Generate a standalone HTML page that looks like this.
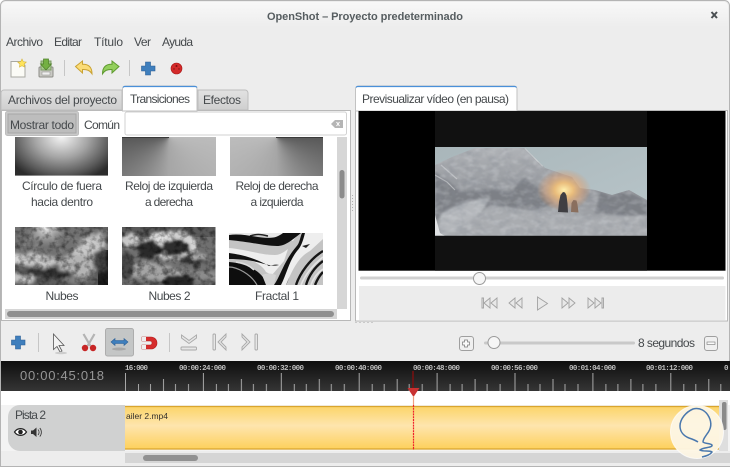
<!DOCTYPE html>
<html><head><meta charset="utf-8"><style>
html,body{margin:0;padding:0;background:#fff;overflow:hidden}
svg{display:block}
text{font-family:"Liberation Sans",sans-serif;font-size:12px;fill:#45494c}
.m{text-anchor:middle}
.r{font-size:7.500px;fill:#bdbdbd;font-family:"Liberation Mono",monospace;font-weight:bold}
</style></head><body>
<svg xmlns="http://www.w3.org/2000/svg" width="730" height="467" viewBox="0 0 730 467">
<defs>
<linearGradient id="tb" x1="0" y1="0" x2="0" y2="1"><stop offset="0" stop-color="#f8f8f8"/><stop offset="1" stop-color="#ededed"/></linearGradient>
<linearGradient id="tab" x1="0" y1="0" x2="0" y2="1"><stop offset="0" stop-color="#e2e2e2"/><stop offset="1" stop-color="#cfcfcf"/></linearGradient>
<linearGradient id="ru" x1="0" y1="0" x2="0" y2="1"><stop offset="0" stop-color="#0e0e0e"/><stop offset="1" stop-color="#353535"/></linearGradient>
<linearGradient id="clip" x1="0" y1="0" x2="0" y2="1"><stop offset="0" stop-color="#fbd467"/><stop offset=".45" stop-color="#fee5ae"/><stop offset="1" stop-color="#fdd05a"/></linearGradient>
<linearGradient id="sky" x1="0" y1="0" x2="1" y2="1"><stop offset="0" stop-color="#a9b6ba"/><stop offset="1" stop-color="#b9c6ca"/></linearGradient>
<linearGradient id="mt" x1="0" y1="0" x2="0" y2="1"><stop offset="0" stop-color="#b0b3b7"/><stop offset=".5" stop-color="#94979c"/><stop offset="1" stop-color="#aaadb1"/></linearGradient>
<radialGradient id="t1" gradientUnits="userSpaceOnUse" cx="0" cy="0" r="1" gradientTransform="translate(61.500 137) scale(60 46)"><stop offset="0" stop-color="#f4f4f4"/><stop offset=".45" stop-color="#a4a4a4"/><stop offset=".8" stop-color="#5a5a5a"/><stop offset="1" stop-color="#2c2c2c"/></radialGradient>
<radialGradient id="glow"><stop offset="0" stop-color="#fff0ae"/><stop offset=".35" stop-color="#f2c078" stop-opacity=".9"/><stop offset=".7" stop-color="#dfa578" stop-opacity=".5"/><stop offset="1" stop-color="#d99560" stop-opacity="0"/></radialGradient>
<radialGradient id="sun"><stop offset="0" stop-color="#fff"/><stop offset=".25" stop-color="#ddd" stop-opacity=".8"/><stop offset="1" stop-color="#aaa" stop-opacity="0"/></radialGradient>
<filter id="cd" x="-10%" y="-10%" width="120%" height="120%"><feTurbulence type="fractalNoise" baseFrequency=".14" numOctaves="3" seed="4" result="n"/><feDisplacementMap in="SourceGraphic" in2="n" scale="10" xChannelSelector="R" yChannelSelector="G"/><feGaussianBlur stdDeviation="1.500"/></filter>
<filter id="cd2" x="-10%" y="-10%" width="120%" height="120%"><feTurbulence type="fractalNoise" baseFrequency=".18" numOctaves="3" seed="9" result="n"/><feDisplacementMap in="SourceGraphic" in2="n" scale="9" xChannelSelector="R" yChannelSelector="G"/><feGaussianBlur stdDeviation="1.200"/></filter>
<filter id="grain" x="0" y="0" width="100%" height="100%"><feTurbulence type="fractalNoise" baseFrequency=".16" numOctaves="3" seed="6"/><feColorMatrix values="0 0 0 0 0 0 0 0 0 0 0 0 0 0 0 2.500 0 0 0 -1.050"/></filter>
<filter id="rock" x="0" y="0" width="100%" height="100%"><feTurbulence type="fractalNoise" baseFrequency=".09 .14" numOctaves="4" seed="3"/><feColorMatrix values="0 0 0 0 .25 0 0 0 0 .27 0 0 0 0 .31 1.800 0 0 0 -.78"/><feGaussianBlur stdDeviation=".5"/></filter>
<filter id="snow" x="0" y="0" width="100%" height="100%"><feTurbulence type="fractalNoise" baseFrequency=".12 .2" numOctaves="3" seed="8"/><feColorMatrix values="0 0 0 0 .85 0 0 0 0 .87 0 0 0 0 .9 2 0 0 0 -.85"/><feGaussianBlur stdDeviation=".5"/></filter>
<filter id="b1"><feGaussianBlur stdDeviation="1.200"/></filter>
<pattern id="ticks" patternUnits="userSpaceOnUse" x="125" y="361" width="77.900" height="30"><path d="M.5 12V30M13.500 23V30M25.500 23V30M38.500 18V30M50.500 23V30M63.500 23V30" stroke="#a8a8a8" stroke-width="1" fill="none"/></pattern>
<clipPath id="c3"><rect x="15" y="227" width="93" height="58"/></clipPath>
<clipPath id="c4"><rect x="122" y="227" width="93.500" height="58"/></clipPath>
<clipPath id="c5"><rect x="229" y="233" width="94" height="52"/></clipPath>
<clipPath id="cv"><rect x="435" y="147" width="212" height="88.600"/></clipPath>
<clipPath id="cmt"><path d="M435 165L452 157 475 148 525 148 535 158 545 168 572 177 580 188 595 190 612 195 629 190 647 200V236H435Z"/></clipPath>
</defs>

<!-- window -->
<rect width="730" height="467" fill="#fff"/>
<rect x=".5" y=".5" width="729" height="470" rx="5" fill="#ededed" stroke="#b4b4b4"/>
<path d="M1.500 27V6a4 4 0 0 1 4-4H724a4 4 0 0 1 4 4V27Z" fill="url(#tb)"/>
<text x="365" y="20" class="m" textLength="196" style="font-weight:bold;fill:#565d60;font-size:11px">OpenShot – Proyecto predeterminado</text>
<path d="M711.500 12l5.500 6M717 12l-5.500 6" stroke="#4a4f52" stroke-width="2"/>

<!-- menu -->
<text x="6" y="46" textLength="37">Archivo</text>
<text x="54" y="46" textLength="28">Editar</text>
<text x="94" y="46" textLength="29">Título</text>
<text x="134" y="46" textLength="17">Ver</text>
<text x="162" y="46" textLength="31">Ayuda</text>

<!-- toolbar -->
<path d="M11 61.500h10l4 4v11.500H11Z" fill="#fbfbf6" stroke="#a9a9a2"/>
<path d="M22 59l1.300 2.700 3 .4-2.200 2 .5 3-2.600-1.400-2.600 1.400.5-3-2.200-2 3-.4Z" fill="#ffe45c" stroke="#d6b53a" stroke-width=".6"/>
<rect x="39" y="67" width="14" height="10" rx="1" fill="#c9c9c4" stroke="#8d8d88"/>
<rect x="41" y="61" width="10" height="9" fill="#a6c98b" stroke="#7d9a67"/>
<path d="M43.500 59h5v5h3l-5.500 6-5.500-6h3Z" fill="#74b043" stroke="#4c7f27" stroke-width=".7"/>
<rect x="42" y="72" width="8" height="3" fill="#efefef" stroke="#8d8d88" stroke-width=".5"/>
<path d="M64.500 60V76M129.500 60V76" stroke="#c6c6c6"/>
<path d="M75.500 66.500l7-5.500v3.300c6.500-.2 9.500 3.200 9.500 9.500-2-3.200-4.500-4.500-9.500-4.300V73Z" fill="#fbdc77" stroke="#c9a233"/>
<path d="M119 66.500l-7-5.500v3.300c-6.500-.2-9.500 3.200-9.500 9.500 2-3.200 4.500-4.500 9.500-4.300V73Z" fill="#93cf5c" stroke="#5f9a2f"/>
<path d="M145.500 62h5v4h4.500v5h-4.500v4h-5v-4H141.500v-5h4Z" fill="#3f7fbd" stroke="#2a5f96" stroke-width=".6"/>
<circle cx="176.500" cy="68.500" r="5.500" fill="#d42a2a" stroke="#a81717" stroke-width=".6"/>
<circle cx="176.500" cy="66" r="1" fill="#7b1010"/><circle cx="174" cy="69" r=".7" fill="#7b1010"/><circle cx="179" cy="69" r=".7" fill="#7b1010"/>

<!-- left panel -->
<rect x="1.500" y="110.500" width="349" height="210" fill="#fff" stroke="#b8b8b8"/>
<path d="M1 110V93a3 3 0 0 1 3-3H122V110Z" fill="url(#tab)" stroke="#bdbdbd"/>
<path d="M198 110V90H245a3 3 0 0 1 3 3V110Z" fill="url(#tab)" stroke="#bdbdbd"/>
<path d="M122.500 111V89a3 3 0 0 1 3-3H194a3 3 0 0 1 3 3V111Z" fill="#fff" stroke="#c2c2c2"/>
<path d="M123 87.500a2 2 0 0 1 2-1H195a2 2 0 0 1 2 1" fill="none" stroke="#4a90d9" stroke-width="1.200"/>
<text x="8" y="104" textLength="109">Archivos del proyecto</text>
<text x="130" y="103" textLength="60">Transiciones</text>
<text x="203" y="104" textLength="38">Efectos</text>

<rect x="5.500" y="111.500" width="73" height="24" rx="2" fill="#c9c9c9" stroke="#bcbcbc"/>
<rect x="8" y="114" width="68" height="19" fill="#bdbdbd" stroke="#a6a6a6"/>
<text x="10" y="129" textLength="64">Mostrar todo</text>
<text x="84" y="129" textLength="36">Común</text>
<rect x="125" y="112" width="221.500" height="23" rx="2" fill="#fff" stroke="#d2d2d2"/>
<path d="M331 124l4-4h8v8h-8Z" fill="#b5b5b5"/><path d="M336.500 122l3 4m0-4l-3 4" stroke="#fff"/>

<!-- thumbnails row 1 -->
<rect x="15" y="137" width="93" height="38.600" fill="url(#t1)"/>
<foreignObject x="122" y="137" width="93.500" height="38.600"><div xmlns="http://www.w3.org/1999/xhtml" style="width:100%;height:100%;background:conic-gradient(from 0deg at 50% 0,#bdbdbd 0 90deg,#bcbcbc 90deg,#a6a6a6 180deg,#7e7e7e 225deg,#585858 270deg,#bdbdbd 270deg)"></div></foreignObject>
<foreignObject x="229.500" y="137" width="93.500" height="38.600"><div xmlns="http://www.w3.org/1999/xhtml" style="width:100%;height:100%;background:conic-gradient(from 0deg at 50% 0,#bdbdbd 0 90deg,#585858 90deg,#7e7e7e 135deg,#a6a6a6 180deg,#bcbcbc 270deg,#bdbdbd 270deg)"></div></foreignObject>
<rect x="122" y="137" width="47" height="1" fill="#3a3a3a"/>
<rect x="276" y="137" width="47" height="1" fill="#3a3a3a"/>
<text x="62" y="190" class="m" textLength="80">Círculo de fuera</text>
<text x="62" y="206" class="m" textLength="62">hacia dentro</text>
<text x="169" y="190" class="m" textLength="88">Reloj de izquierda</text>
<text x="169" y="206" class="m" textLength="48">a derecha</text>
<text x="277" y="190" class="m" textLength="83">Reloj de derecha</text>
<text x="277" y="206" class="m" textLength="53">a izquierda</text>

<!-- Nubes -->
<g clip-path="url(#c3)">
<rect x="15" y="227" width="93" height="58" fill="#5c5c5c"/>
<rect x="15" y="227" width="93" height="30" fill="#727272"/>
<path d="M46 227L18 250M46 227L34 250M46 227L62 252M46 227L84 244" stroke="#aaa" stroke-width="3" opacity=".35" filter="url(#b1)"/>
<circle cx="46" cy="227" r="20" fill="url(#sun)"/>
<rect x="98" y="250" width="12" height="36" fill="#1d1d1d"/>
<g filter="url(#cd)">
<path d="M62 265c6-12 14-14 20-24 6-6 12-8 22-6v30Z" fill="#c8c8c8"/>
<ellipse cx="78" cy="265" rx="20" ry="12" fill="#b4b4b4"/>
<ellipse cx="35" cy="261" rx="24" ry="7" fill="#c6c6c6"/>
<ellipse cx="18" cy="258" rx="8" ry="5" fill="#d4d4d4"/>
<ellipse cx="45" cy="274" rx="30" ry="4" fill="#333"/>
<ellipse cx="22" cy="279" rx="14" ry="5" fill="#c4c4c4"/>
<ellipse cx="78" cy="280" rx="18" ry="3" fill="#808080"/>
<ellipse cx="100" cy="262" rx="7" ry="12" fill="#444"/>
</g>
<rect x="15" y="227" width="93" height="58" filter="url(#grain)" opacity=".45"/>
</g>
<!-- Nubes 2 -->
<g clip-path="url(#c4)">
<rect x="122" y="227" width="94" height="58" fill="#707070"/>
<rect x="122" y="227" width="94" height="10" fill="#5a5a5a"/>
<g filter="url(#cd2)">
<ellipse cx="130" cy="240" rx="9" ry="7" fill="#c8c8c8"/>
<ellipse cx="170" cy="246" rx="28" ry="14" fill="#d4d4d4"/>
<ellipse cx="160" cy="236" rx="8" ry="5" fill="#e0e0e0"/>
<ellipse cx="180" cy="236" rx="10" ry="5" fill="#d0d0d0"/>
<ellipse cx="150" cy="250" rx="13" ry="8" fill="#2a2a2a"/>
<ellipse cx="176" cy="248" rx="14" ry="8" fill="#2f2f2f"/>
<ellipse cx="193" cy="260" rx="12" ry="6" fill="#3a3a3a"/>
<ellipse cx="150" cy="271" rx="24" ry="9" fill="#a4a4a4"/>
<ellipse cx="200" cy="257" rx="10" ry="3" fill="#b0b0b0"/>
<ellipse cx="127" cy="265" rx="7" ry="14" fill="#4a4a4a"/>
<ellipse cx="178" cy="281" rx="16" ry="6" fill="#252525"/>
<ellipse cx="180" cy="272" rx="10" ry="3" fill="#b0b0b0"/>
<ellipse cx="206" cy="276" rx="12" ry="5" fill="#8c8c8c"/>
</g>
<rect x="122" y="227" width="94" height="58" filter="url(#grain)" opacity=".5"/>
</g>
<!-- Fractal -->
<g clip-path="url(#c5)">
<rect x="229" y="233" width="94" height="52" fill="#c4c4c4"/>
<path d="M229 233h70l-6 8c-22-6-44-6-64-3Z" fill="#e8e8e8"/>
<path d="M250 236c6-2 10-2 18 0" stroke="#222" stroke-width="1.500" fill="none"/>
<path d="M229 240c22 2 36 6 48 6 8 0 14-5 24-13h-18c-4 3-8 5-14 5-12 0-26-5-40-3Z" fill="#111"/>
<path d="M229 248c20 2 32 7 46 7 5 0 9-3 13-6l-4 12-12 14-6-3c-4-8-20-16-37-17Z" fill="#eee"/>
<path d="M229 253c16 2 30 7 40 13 3-1 7-2 10-1-12 3-18-6-50-6Z" fill="#111"/>
<path d="M229 262c16 1 30 8 36 18l3 5H229Z" fill="#0e0e0e"/>
<path d="M229 267c8 0 22 7 28 18" stroke="#999" stroke-width="1.200" fill="none"/>
<path d="M236 262c8 1 14 4 18 8" stroke="#ddd" stroke-width="1.500" fill="none"/>
<path d="M262 275c5-2 9-2 14 0l-2 10h-8Z" fill="#d4d4d4"/>
<path d="M274 285c6-8 10-24 22-38 4-4 4-10 6-14h6c-2 6-4 12-8 16-10 12-8 26-14 36Z" fill="#111"/>
<path d="M286 285c6-14 12-28 24-34l13-12V233h-18c-2 8-4 14-8 18-8 10-10 22-16 34Z" fill="#eeeeee"/>
<path d="M296 285c4-12 14-26 27-34M306 285c3-10 9-18 17-24M315 285c2-5 4-9 8-13" stroke="#161616" stroke-width="2.400" fill="none"/>
<path d="M301 285c4-10 12-20 22-28M311 285c2-6 6-12 12-16" stroke="#e4e4e4" stroke-width="1.600" fill="none"/>
<path d="M302 246l8-2-4 4Z" fill="#222"/>
</g>
<text x="62" y="300" class="m" textLength="33">Nubes</text>
<text x="169.500" y="300" class="m" textLength="42">Nubes 2</text>
<text x="277" y="300" class="m" textLength="44">Fractal 1</text>

<!-- scrollbars -->
<rect x="337" y="137" width="10" height="172" fill="#d6d6d6"/>
<rect x="339.500" y="170" width="5" height="28.500" rx="2.500" fill="#8b8b8b"/>
<rect x="5" y="309" width="332" height="10" fill="#d6d6d6"/>
<rect x="7" y="311" width="327" height="6" rx="3" fill="#8f8f8f"/>
<path d="M352.500 195v1M352.500 198v1M352.500 201v1M352.500 204v1M352.500 207v1M352.500 210v1" stroke="#b0b0b0"/>

<!-- right panel -->
<rect x="355.500" y="110.500" width="372" height="210.500" fill="#fff" stroke="#b8b8b8"/>
<path d="M355.500 111V89a3 3 0 0 1 3-3H514a3 3 0 0 1 3 3V111Z" fill="#fff" stroke="#c2c2c2"/>
<path d="M356 87.500a2 2 0 0 1 2-1H514.500a2 2 0 0 1 2 1" fill="none" stroke="#4a90d9" stroke-width="1.200"/>
<text x="362" y="103" textLength="147">Previsualizar vídeo (en pausa)</text>
<rect x="358.500" y="111" width="367" height="159.700" fill="#000"/>
<rect x="435" y="111" width="212" height="159.700" fill="#111"/>
<g clip-path="url(#cv)">
<rect x="435" y="147" width="212" height="89" fill="url(#sky)"/>
<g clip-path="url(#cmt)">
<rect x="435" y="147" width="212" height="89" fill="url(#mt)"/>
<path d="M435 172l12 8 14 12 30-3 18 4 16-16 18 16 12 10-35 12-60-6-25 12Z" fill="#7d8086" filter="url(#b1)"/>
<path d="M440 215c12-10 30-14 50-18l-6 12-14 20-30 6Z" fill="#b4b7bb" filter="url(#b1)"/>
<path d="M600 192l12 4 14-5 21 10v20l-30-6-22-2Z" fill="#7c7f85" filter="url(#b1)"/>
<path d="M490 205l100 12 57-2v21H450Z" fill="#a9acb0" filter="url(#b1)"/>
<path d="M435 175l12 7 8 8M441 165l16 14" stroke="#d8dadc" stroke-width="1.200" opacity=".6" fill="none"/>
<path d="M525 148l12 12 6 6" stroke="#dfe3e5" stroke-width="1.500" fill="none" opacity=".8"/>
<rect x="435" y="147" width="212" height="89" filter="url(#rock)" opacity=".5"/>
<rect x="435" y="147" width="212" height="89" filter="url(#snow)" opacity=".3"/>
</g>
<path d="M435 215l5 18 5 3h-10Z" fill="#dfe1e3"/>
<ellipse cx="564" cy="190" rx="27" ry="21" fill="url(#glow)"/>
<path d="M558 212l1-10 1.500-7 2.500-3 2 .5 1.500 3 1 8 .5 9Z" fill="#3f3e42"/>
<path d="M571 212l.5-9 2-3 3 .5 1 4 1 8Z" fill="#8a6f5e"/>
</g>

<rect x="360" y="276.500" width="364" height="3" rx="1.500" fill="#d0d0d0"/>
<circle cx="479.500" cy="278.500" r="6" fill="#f6f6f6" stroke="#9a9a9a"/>
<rect x="359" y="286" width="366.500" height="34" fill="#ececec"/>
<g fill="#e8e8e8" stroke="#a2a2a2" stroke-width=".9">
<path d="M482 298v10h1.500v-10ZM490 298l-6 5 6 5ZM497 298l-6 5 6 5Z"/>
<path d="M515 298l-6 5 6 5ZM522 298l-6 5 6 5Z"/>
<path d="M537.500 297v13l10-6.500Z"/>
<path d="M562 298l6 5-6 5ZM569 298l6 5-6 5Z"/>
<path d="M588 298l6 5-6 5ZM595 298l6 5-6 5ZM602 298v10h1.500v-10Z"/>
</g>
<path d="M356 322v1M360 322v1M364 322v1M368 322v1M372 322v1" stroke="#a8a8a8"/>

<!-- bottom toolbar -->
<path d="M15.500 336h5v4h4.500v5h-4.500v4h-5v-4H11.500v-5h4Z" fill="#3f7fbd" stroke="#2a5f96" stroke-width=".6"/>
<path d="M38.500 333V352M169.500 333V352" stroke="#c6c6c6"/>
<path d="M53.500 334v15.500l3.500-3 3 5.500 2-1-3-5.500h5Z" fill="#f4f4f4" stroke="#555" stroke-width=".8"/>
<ellipse cx="61" cy="353" rx="6" ry="1.200" fill="#ccc"/>
<path d="M83.500 334l7 12M94.500 334l-7 12" stroke="#b4b4b4" stroke-width="2.200"/>
<circle cx="85" cy="348" r="3.200" fill="#c72525"/><circle cx="93" cy="348" r="3.200" fill="#c72525"/>
<rect x="105.500" y="328.500" width="28" height="27.500" rx="2" fill="#c4c6c6" stroke="#adadad"/>
<path d="M111 342l4-3.500v2h9v-2l4 3.500-4 3.500v-2h-9v2Z" fill="#3f7fbd" stroke="#2a5f96" stroke-width=".6"/>
<ellipse cx="119" cy="349" rx="7" ry="1.500" fill="#a8a8a8"/>
<path d="M142 337h9a6 6 0 0 1 0 12h-9v-4h8a2 2 0 0 0 0-4h-8Z" fill="#d62c2c" stroke="#b01c1c" stroke-width=".6"/>
<rect x="142" y="337" width="4" height="4" fill="#eee"/><rect x="142" y="345" width="4" height="4" fill="#eee"/>
<g fill="#e6e6e6" stroke="#a8a8a8" stroke-width=".9">
<path d="M181.500 335l7.500 5.500 7.500-5.500v3l-7.500 5.500-7.500-5.500Z"/>
<rect x="181" y="347" width="15.500" height="3" rx="1"/>
<rect x="213" y="334" width="2.500" height="16" rx="1"/>
<path d="M226 334v3l-5 5 5 5v3l-8-8Z"/>
<rect x="255" y="334" width="2.500" height="16" rx="1"/>
<path d="M242 334v3l5 5-5 5v3l8-8Z"/>
</g>
<rect x="459.500" y="336.500" width="14" height="14" rx="2.500" fill="#f0f0f0" stroke="#9f9f9f"/>
<path d="M464.500 340h3v2h2v3h-2v2h-3v-2h-2v-3h2Z" fill="#fafafa" stroke="#777" stroke-width=".7"/>
<rect x="484" y="341.500" width="151" height="3" rx="1.500" fill="#c9c9c9"/>
<circle cx="494" cy="342.500" r="6" fill="#f6f6f6" stroke="#9a9a9a"/>
<text x="638" y="347" textLength="57">8 segundos</text>
<rect x="704.500" y="336.500" width="13" height="14" rx="2.500" fill="#f0f0f0" stroke="#9f9f9f"/>
<rect x="707" y="342" width="8" height="2.500" fill="#fafafa" stroke="#777" stroke-width=".6"/>

<!-- ruler -->
<rect x="1" y="361" width="729" height="30" fill="url(#ru)"/>
<rect x="125" y="361" width="605" height="30" fill="url(#ticks)"/>
<text x="20" y="380" textLength="84" style="fill:#969696;font-size:13px">00:00:45:018</text>
<text x="125" y="370" class="r" textLength="23">16:000</text>
<text x="179" y="370" class="r" textLength="47">00:00:24:000</text>
<text x="257" y="370" class="r" textLength="47">00:00:32:000</text>
<text x="335" y="370" class="r" textLength="47">00:00:40:000</text>
<text x="413" y="370" class="r" textLength="47">00:00:48:000</text>
<text x="491" y="370" class="r" textLength="47">00:00:56:000</text>
<text x="569" y="370" class="r" textLength="47">00:01:04:000</text>
<text x="646" y="370" class="r" textLength="47">00:01:12:000</text>
<text x="724" y="370" class="r">0</text>

<!-- tracks -->
<rect x="1" y="391" width="729" height="14" fill="#fff"/>
<rect x="1" y="405" width="729" height="46" fill="#f3f3f3"/>
<path d="M125 405H20a12 12 0 0 0-12 12V439a12 12 0 0 0 12 12H125Z" fill="#d0d1d1"/>
<text x="15" y="419" textLength="31">Pista 2</text>
<path d="M14.500 432c3-4.500 9-4.500 12 0-3 4.500-9 4.500-12 0Z" fill="#fff" stroke="#222" stroke-width="1.200"/><circle cx="20.500" cy="432" r="2.300" fill="#222"/>
<path d="M31 430.500h2l3.500-3v9.500l-3.500-3h-2Z" fill="#333"/><path d="M38 429.500a4 4 0 0 1 0 5.500M39.800 428a6.500 6.500 0 0 1 0 8.500" stroke="#333" fill="none" stroke-width=".8"/>
<rect x="125" y="406" width="594" height="43.500" fill="url(#clip)"/>
<path d="M125 406.500H719M125 449H719" stroke="#d9a52e" stroke-width="1.200"/>
<text x="126" y="419" textLength="42" style="font-size:8.500px;fill:#33302a">ailer 2.mp4</text>
<rect x="719" y="400" width="9" height="51" fill="#dedede"/>
<rect x="722" y="402" width="4.500" height="28" rx="2" fill="#8a8a8a"/>
<rect x="1" y="451" width="729" height="16" fill="#ededed"/>
<rect x="125" y="453" width="605" height="10" fill="#d5d5d5"/>
<rect x="143" y="455" width="55" height="6" rx="3" fill="#919191"/>
<path d="M0 466.500H730" stroke="#b4b4b4"/>

<!-- playhead -->
<path d="M413 371V389" stroke="#7a1010" stroke-width="1.500"/>
<path d="M407.500 388h12l-6 9Z" fill="#c93232"/>
<path d="M413.500 396V405" stroke="#f0a080" stroke-width="1.200"/>
<path d="M413.500 405V450" stroke="#f0202a" stroke-width="1.200" stroke-dasharray="2 .8"/>

<!-- watermark -->
<circle cx="697" cy="432" r="26.500" fill="#fdf5e4" fill-opacity=".95" stroke="#fff" stroke-opacity=".7"/>
<path d="M698 442c-3-2-6-3-9-4-5-2-9-6-9-12 0-7 6-14 13-17 7-2 13 2 16 8 3 6 2 12-2 17-2 3-4 5-4 8 2 2 7 1 9 3 1 3-9 2-12 5 3 2 10 0 12 2-2 3-6 4-10 5" fill="none" stroke="#4a78ad" stroke-width="1.500"/>
</svg>
</body></html>
